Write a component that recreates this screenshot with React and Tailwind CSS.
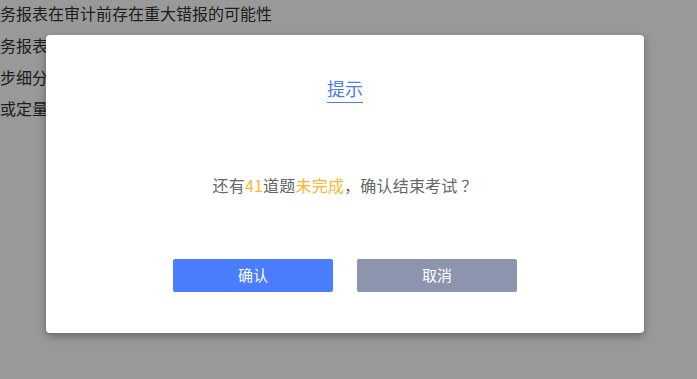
export default function App() {
  const font = { fontFamily: '"Noto Sans CJK SC", "Liberation Sans", sans-serif' };
  return (
    <div className="relative w-[697px] h-[379px] overflow-hidden bg-white" style={font}>
      <div className="flex flex-col text-[16px] leading-[31px] text-[#333] -mt-[2px]">
        <div className="h-[32px]">务报表在审计前存在重大错报的可能性</div>
        <div className="h-[32px]">务报表层次重大错报风险</div>
        <div className="h-[31px]">步细分为具体审计程序</div>
        <div className="h-[31px]">或定量的重要性水平</div>
      </div>
      <div className="absolute inset-0 bg-[rgba(0,0,0,0.4)]" />
      <div className="absolute left-[46px] top-[35px] w-[598px] h-[298px] bg-white rounded-[4px] shadow-[0_3px_8px_rgba(0,0,0,0.35)] flex flex-col items-center">
        <div className="mt-[41px] text-[18px] leading-[24px] text-[#4a7cf6] border-b border-[#4a7cf6] pb-[2px]">提示</div>
        <div className="mt-[71px] text-[16px] leading-[22px] text-[#666] tracking-[0.2px]">
          还有<span className="text-[#fbb731]">41</span>道题<span className="text-[#fbb731]">未完成</span>，确认结束考试 ？
        </div>
        <div className="mt-[63px] flex gap-[24px]">
          <button className="w-[160px] h-[33px] rounded-[2px] bg-[#4a7dff] text-white text-[15px]">确认</button>
          <button className="w-[160px] h-[33px] rounded-[2px] bg-[#8d95ae] text-white text-[15px]">取消</button>
        </div>
      </div>
    </div>
  );
}
